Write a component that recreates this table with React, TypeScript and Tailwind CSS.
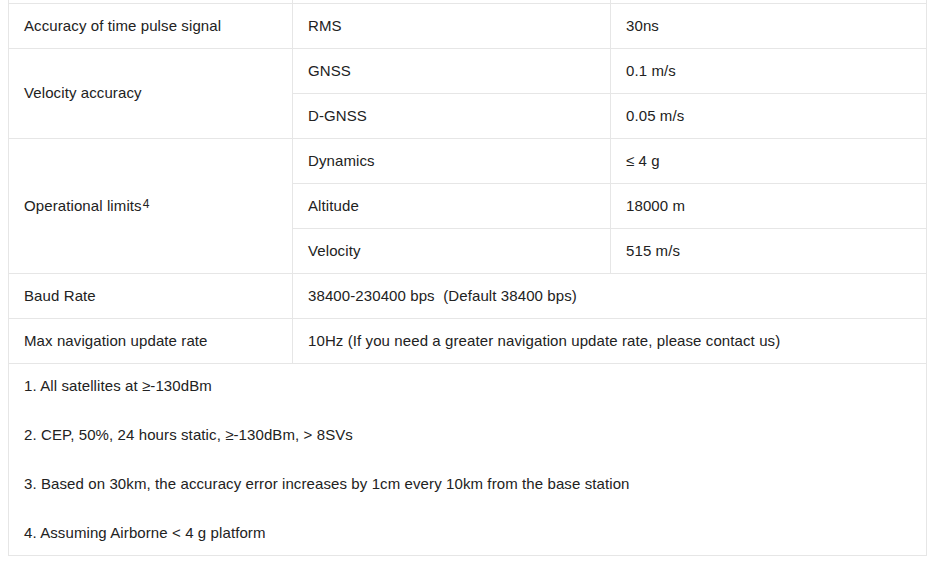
import React from 'react';

const cell = 'flex items-center pl-[15px] border-r border-b border-[#e6e6e6] h-[45px]';

export default function App() {
  return (
    <div className="min-h-screen bg-white text-[15px] tracking-[0.1px] text-[#222] font-['Liberation_Sans',Arial,sans-serif]">
      <div className="ml-2 w-[919px] border-l border-[#e6e6e6] grid grid-cols-[284px_318px_316px]">
        {/* row cut off at the top */}
        <div className="h-[4px] border-r border-b border-[#e6e6e6]" />
        <div className="h-[4px] border-r border-b border-[#e6e6e6]" />
        <div className="h-[4px] border-r border-b border-[#e6e6e6]" />

        <div className={cell}>Accuracy of time pulse signal</div>
        <div className={cell}>RMS</div>
        <div className={cell}>30ns</div>

        <div className="row-span-2 flex items-center pl-[15px] border-r border-b border-[#e6e6e6]">Velocity accuracy</div>
        <div className={cell}>GNSS</div>
        <div className={cell}>0.1 m/s</div>
        <div className={cell}>D-GNSS</div>
        <div className={cell}>0.05 m/s</div>

        <div className="row-span-3 flex items-center pl-[15px] border-r border-b border-[#e6e6e6]">
          <span>
            Operational limits<sup className="text-[12px] relative -top-[3px] ml-[1px]">4</sup>
          </span>
        </div>
        <div className={cell}>Dynamics</div>
        <div className={cell}>≤ 4 g</div>
        <div className={cell}>Altitude</div>
        <div className={cell}>18000 m</div>
        <div className={cell}>Velocity</div>
        <div className={cell}>515 m/s</div>

        <div className={cell}>Baud Rate</div>
        <div className={`${cell} col-span-2 whitespace-pre`}>38400-230400 bps  (Default 38400 bps)</div>

        <div className={cell}>Max navigation update rate</div>
        <div className={`${cell} col-span-2`}>10Hz (If you need a greater navigation update rate, please contact us)</div>

        <div className="col-span-3 h-[192px] pl-[15px] pt-[10px] border-r border-b border-[#e6e6e6] flex flex-col gap-[25px]">
          <p className="leading-[24px]">1. All satellites at ≥-130dBm</p>
          <p className="leading-[24px]">2. CEP, 50%, 24 hours static, ≥-130dBm, &gt; 8SVs</p>
          <p className="leading-[24px]">3. Based on 30km, the accuracy error increases by 1cm every 10km from the base station</p>
          <p className="leading-[24px]">4. Assuming Airborne &lt; 4 g platform</p>
        </div>
      </div>
    </div>
  );
}
